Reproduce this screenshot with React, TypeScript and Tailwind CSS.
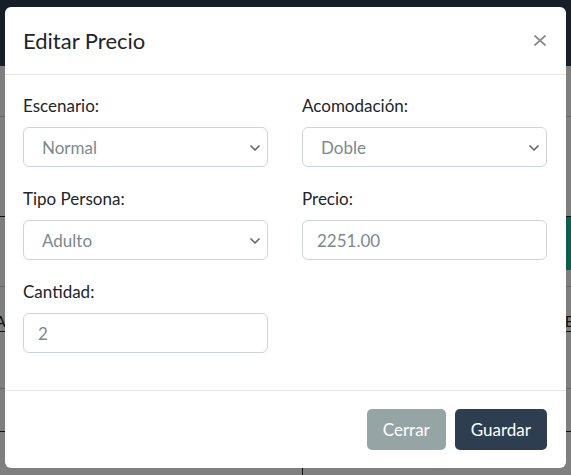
import React from 'react';

const Chevron: React.FC = () => (
  <svg
    className="pointer-events-none absolute right-[8px] top-[18px]"
    width="10"
    height="6"
    viewBox="0 0 10 6"
    fill="none"
  >
    <path d="M1 1l4 4 4-4" stroke="#5f6b73" strokeWidth="1.7" strokeLinecap="round" strokeLinejoin="round" />
  </svg>
);

const SelectField: React.FC<{ label: string; value: string }> = ({ label, value }) => (
  <div className="flex flex-col">
    <label className="mb-[9px] text-[17px] leading-[24px] text-[#212529]">{label}</label>
    <div className="relative">
      <select
        defaultValue={value}
        className="h-[40px] w-full appearance-none rounded-[6px] border border-[#ced4da] bg-white pl-[18px] pr-[30px] pt-[1px] text-[17px] text-[#7b8a8b] outline-none"
      >
        <option value={value}>{value}</option>
      </select>
      <Chevron />
    </div>
  </div>
);

const InputField: React.FC<{ label: string; value: string }> = ({ label, value }) => (
  <div className="flex flex-col">
    <label className="mb-[9px] text-[17px] leading-[24px] text-[#212529]">{label}</label>
    <input
      readOnly
      value={value}
      className="h-[40px] w-full rounded-[6px] border border-[#ced4da] bg-white px-[14px] pt-[1px] text-[17px] text-[#7b8a8b] outline-none"
    />
  </div>
);

// the page sitting behind the backdrop, only its edges show
const BackgroundPage: React.FC = () => (
  <div className="flex h-[475px] w-[571px] flex-col bg-white">
    <div className="h-[66px] bg-[#2c3e50]" />
    <div className="h-[51px] border-b border-[#d0d0d0]" />
    <div className="h-[100px] border-b border-[#222]" />
    <div className="flex h-[70px] border-b border-[#d0d0d0]">
      <div className="flex-1" />
      <div className="h-[53px] w-[10px] bg-[#18bc9c]" />
    </div>
    <div className="flex h-[45px] items-end justify-between border-b border-[#222] text-[16px] leading-[20px] text-[#212529]">
      <span className="-ml-[5px]">A</span>
      <span className="-mr-[3px]">E</span>
    </div>
    <div className="h-[57px] border-b border-[#d0d0d0]" />
    <div className="h-[43px] border-b border-[#222]" />
    <div className="flex flex-1">
      <div className="w-[303px] border-r border-[#222]" />
      <div className="ml-[30px] mt-[4px] h-[30px] w-[203px] rounded-[6px] border border-[#bbb]" />
    </div>
  </div>
);

export default function App() {
  return (
    <div className="relative h-[475px] w-[571px] overflow-hidden font-['Lato','Open_Sans',sans-serif]">
      <BackgroundPage />

      <div className="absolute inset-0 flex justify-center bg-black/50 pt-[7px]">
        <div className="flex h-[461px] w-[561px] flex-col rounded-[6px] bg-white">
          <div className="flex h-[68px] items-center justify-between border-b border-[#e6e6e6] pl-[18px] pr-[16px]">
            <h5 className="text-[22px] leading-[30px] text-[#212529]">Editar Precio</h5>
            <button className="flex h-[20px] w-[20px] items-center justify-center">
              <svg width="12" height="11" viewBox="0 0 12 11" fill="none">
                <path d="M1 1l10 9M11 1l-10 9" stroke="#8c8c8c" strokeWidth="1.8" strokeLinecap="round" />
              </svg>
            </button>
          </div>

          <div className="grid grid-cols-2 gap-x-[34px] gap-y-[20px] pb-[37px] pl-[18px] pr-[19px] pt-[19px]">
            <SelectField label="Escenario:" value="Normal" />
            <SelectField label="Acomodación:" value="Doble" />
            <SelectField label="Tipo Persona:" value="Adulto" />
            <InputField label="Precio:" value="2251.00" />
            <InputField label="Cantidad:" value="2" />
          </div>

          <div className="flex flex-1 items-center justify-end gap-[9px] border-t border-[#e6e6e6] pl-[18px] pr-[19px]">
            <button className="h-[41px] rounded-[5px] bg-[#95a5a6] px-[16px] text-[17px] text-white">Cerrar</button>
            <button className="h-[41px] rounded-[5px] bg-[#2c3e50] px-[16px] text-[17px] text-white">Guardar</button>
          </div>
        </div>
      </div>
    </div>
  );
}
